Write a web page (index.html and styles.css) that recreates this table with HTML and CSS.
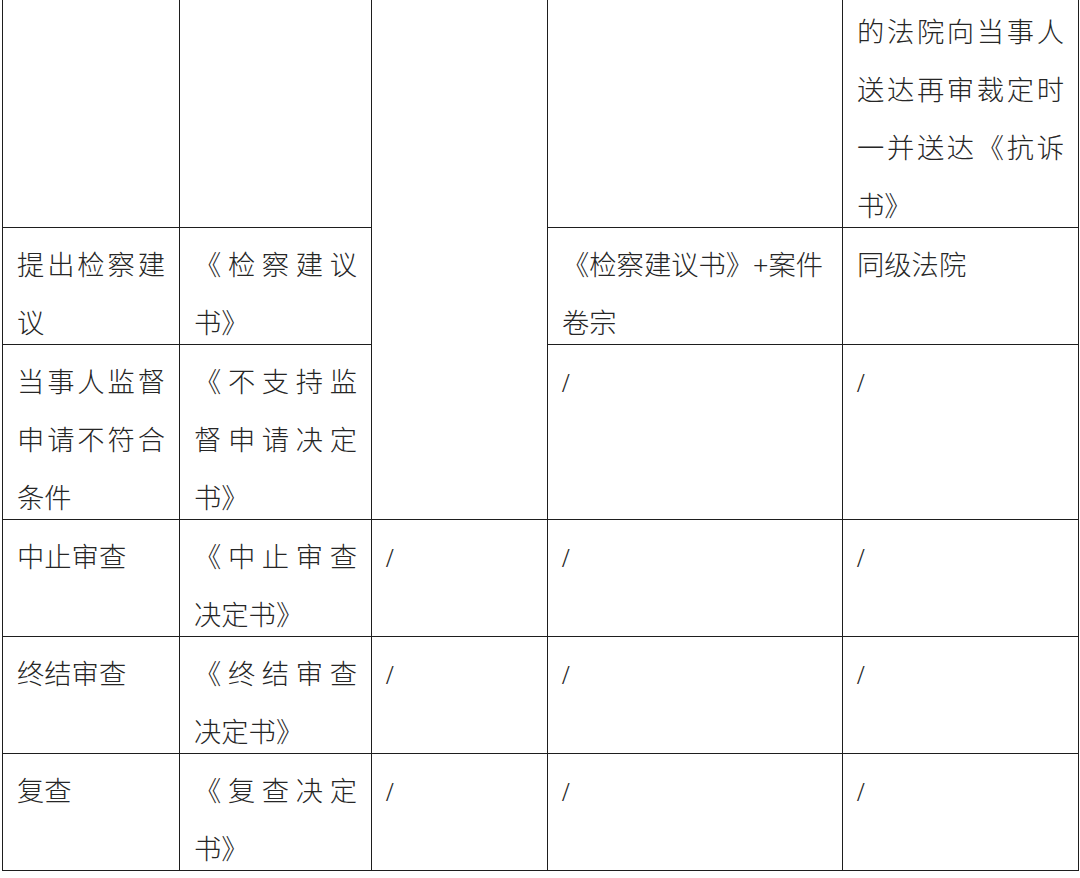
FILE: index.html
```html
<!DOCTYPE html>
<html lang="zh-CN">
<head>
<meta charset="utf-8">
<title>检察文书送达表</title>
<link rel="stylesheet" href="styles.css">
</head>
<body>
<div class="sheet">
  <div class="cell c1"></div>
  <div class="cell c2"></div>
  <div class="cell c3 span3"></div>
  <div class="cell c4"></div>
  <div class="cell c5"><p class="txt">的法院向当事人送达再审裁定时一并送达《抗诉书》</p></div>

  <div class="cell c1"><p class="txt">提出检察建议</p></div>
  <div class="cell c2"><p class="txt">《检察建议书》</p></div>
  <div class="cell c4"><p class="txt left">《检察建议书》+案件卷宗</p></div>
  <div class="cell c5"><p class="txt">同级法院</p></div>

  <div class="cell c1"><p class="txt">当事人监督申请不符合条件</p></div>
  <div class="cell c2"><p class="txt">《不支持监督申请决定书》</p></div>
  <div class="cell c4"><p class="txt">/</p></div>
  <div class="cell c5"><p class="txt">/</p></div>

  <div class="cell c1"><p class="txt">中止审查</p></div>
  <div class="cell c2"><p class="txt">《中止审查决定书》</p></div>
  <div class="cell c3"><p class="txt">/</p></div>
  <div class="cell c4"><p class="txt">/</p></div>
  <div class="cell c5"><p class="txt">/</p></div>

  <div class="cell c1"><p class="txt">终结审查</p></div>
  <div class="cell c2"><p class="txt">《终结审查决定书》</p></div>
  <div class="cell c3"><p class="txt">/</p></div>
  <div class="cell c4"><p class="txt">/</p></div>
  <div class="cell c5"><p class="txt">/</p></div>

  <div class="cell c1"><p class="txt">复查</p></div>
  <div class="cell c2"><p class="txt">《复查决定书》</p></div>
  <div class="cell c3"><p class="txt">/</p></div>
  <div class="cell c4"><p class="txt">/</p></div>
  <div class="cell c5"><p class="txt">/</p></div>
</div>
</body>
</html>
```
FILE: styles.css
```css
html, body {
  margin: 0;
  padding: 0;
  background: #ffffff;
  overflow: hidden;
}

body {
  font-family: "Liberation Serif", "Noto Sans CJK SC", serif;
  font-size: 27.3px;
  font-weight: 300;
  color: #262626;
}

.sheet {
  display: grid;
  grid-template-columns: 177px 192px 176px 295px 236px;
  width: 1077px;
  box-sizing: border-box;
  margin: -6px 0 0 2px;
  border-left: 1px solid #1e1e1e;
  border-top: 1px solid #1e1e1e;
}

.cell {
  box-sizing: border-box;
  border-right: 1px solid #1e1e1e;
  border-bottom: 1px solid #1e1e1e;
  padding: 0 14px;
  min-width: 0;
}

.c1 { grid-column: 1; }
.c2 { grid-column: 2; }
.c3 { grid-column: 3; }
.c4 { grid-column: 4; }
.c5 { grid-column: 5; }

.span3 { grid-row: span 3; }

.txt {
  margin: 0 0 -9px;
  padding-top: 9px;
  line-height: 58px;
  text-align: justify;
}

.txt.left {
  text-align: left;
}
```
